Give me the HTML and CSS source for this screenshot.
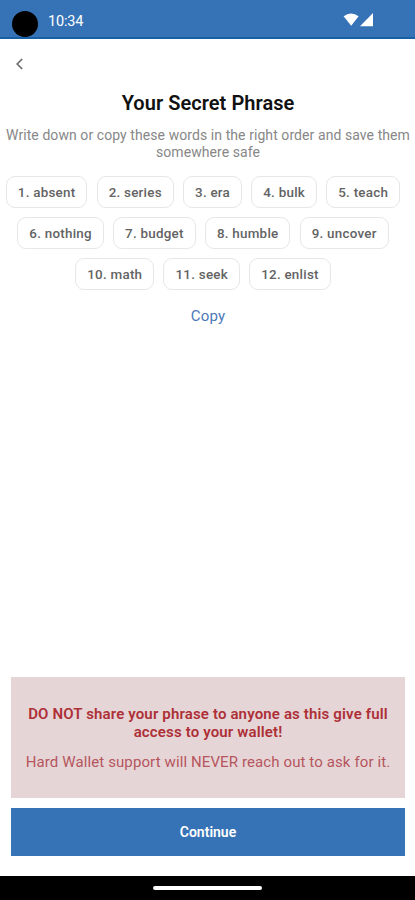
FILE: index.html
```html
<!DOCTYPE html>
<html lang="en">
<head>
<meta charset="utf-8">
<meta name="viewport" content="width=device-width, initial-scale=1">
<title>Your Secret Phrase</title>
<link rel="stylesheet" href="styles.css">
</head>
<body>
<div class="screen">
  <header class="status">
    <span class="camera"></span>
    <span class="time">10:34</span>
    <svg class="signals" width="32" height="16" viewBox="0 0 32 16" fill="#fff"><path d="M.6 4.3Q8 -1.5 15.6 4.3L8.2 13.8Z"/><path d="M30 1V14.2H17Z"/></svg>
  </header>
  <nav class="nav">
    <svg width="10" height="14" viewBox="0 0 10 14" fill="none" stroke="#6c6c6c" stroke-width="1.7"><path d="M7.2 2L2.2 7L7.2 12"/></svg>
  </nav>
  <main class="main">
    <h1 class="title">Your Secret Phrase</h1>
    <p class="hint">Write down or copy these words in the right order and save them<br>somewhere safe</p>
    <div class="words">
      <div class="row"><span class="word">1. absent</span><span class="word">2. series</span><span class="word">3. era</span><span class="word">4. bulk</span><span class="word">5. teach</span></div>
      <div class="row"><span class="word">6. nothing</span><span class="word">7. budget</span><span class="word">8. humble</span><span class="word">9. uncover</span></div>
      <div class="row"><span class="word">10. math</span><span class="word">11. seek</span><span class="word">12. enlist</span></div>
    </div>
    <a class="copy">Copy</a>
  </main>
  <footer class="footer">
    <section class="warning">
      <p class="warning-strong">DO NOT share your phrase to anyone as this give full<br>access to your wallet!</p>
      <p class="warning-text">Hard Wallet support will NEVER reach out to ask for it.</p>
    </section>
    <button class="continue">Continue</button>
  </footer>
  <div class="gesture"><span class="handle"></span></div>
</div>
</body>
</html>
```
FILE: styles.css
```css
* { box-sizing: border-box; }
body { margin: 0; font-family: Roboto, sans-serif; background: #fff; }
p, h1 { margin: 0; }
.screen { width: 415px; height: 900px; display: flex; flex-direction: column; overflow: hidden; }
.status { height: 39px; flex: none; display: flex; align-items: flex-start; background: #3673b6; border-bottom: 2px solid #1760a6; color: #fff; padding: 0 40px 0 12px; }
.camera { width: 26px; height: 26px; border-radius: 50%; background: #000; margin-top: 11px; }
.time { margin: 13px 0 0 10px; font-size: 14.5px; line-height: 18px; letter-spacing: -.15px; }
.signals { margin: 12px 0 0 auto; }
.nav { height: 51px; flex: none; padding: 18px 0 0 15px; }
.nav svg { display: block; }
.main { flex: 1; display: flex; flex-direction: column; align-items: center; padding-left: 1px; text-align: center; white-space: nowrap; }
.title { margin-top: 1px; font-size: 20px; line-height: 24px; font-weight: 600; color: #111; letter-spacing: .05px; }
.hint { margin-top: 12px; font-size: 14px; line-height: 17px; letter-spacing: .075px; color: #878787; }
.words { margin-top: 15px; padding-right: 10px; display: flex; flex-direction: column; gap: 9.5px; }
.row { display: flex; justify-content: center; gap: 9.2px; }
.word { height: 31.7px; padding: 0 11px; border: 1px solid #e7e7e7; border-radius: 9px; font-size: 13.4px; line-height: 31px; font-weight: 500; letter-spacing: .25px; color: #636363; }
.copy { margin-top: 16px; font-size: 15px; line-height: 20px; letter-spacing: .15px; color: #4b79b8; }
.footer { flex: none; padding: 0 10px 20px 11px; text-align: center; white-space: nowrap; }
.warning { height: 121px; padding-top: 28px; background: #e6d5d7; color: #ad3037; }
.warning-strong { font-size: 15px; line-height: 18px; font-weight: 600; letter-spacing: .15px; }
.warning-text { margin-top: 12px; font-size: 15px; line-height: 18px; letter-spacing: .11px; color: #b5565d; }
.continue { display: block; width: 100%; height: 48px; margin-top: 10px; padding: 0; border: 0; background: #3673b6; color: #fff; font: 600 14px/48px Roboto, sans-serif; }
.gesture { height: 24px; flex: none; display: flex; justify-content: center; background: #000; }
.handle { width: 109px; height: 4px; margin-top: 10px; border-radius: 2px; background: #fff; }
```
